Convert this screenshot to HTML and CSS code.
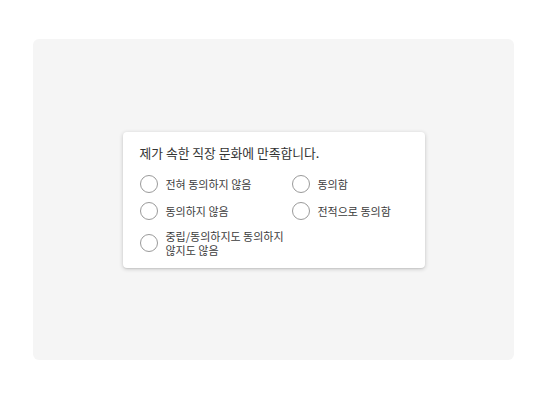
FILE: index.html
```html
<!DOCTYPE html>
<html>

<head>
  <meta charset="utf-8">
  <title>Survey</title>
  <link rel="stylesheet" href="styles.css">
</head>

<body>
  <div class="panel">
    <div class="card">
      <p class="question">제가 속한 직장 문화에 만족합니다.</p>

      <div class="options">
        <label class="option">
          <span class="radio"></span>
          <span class="option-label">전혀 동의하지 않음</span>
        </label>
        <label class="option">
          <span class="radio"></span>
          <span class="option-label">동의함</span>
        </label>
        <label class="option">
          <span class="radio"></span>
          <span class="option-label">동의하지 않음</span>
        </label>
        <label class="option">
          <span class="radio"></span>
          <span class="option-label">전적으로 동의함</span>
        </label>
        <label class="option">
          <span class="radio"></span>
          <span class="option-label">중립/동의하지도 동의하지 않지도 않음</span>
        </label>
      </div>
    </div>
  </div>
</body>

</html>
```

FILE: styles.css
```css
body {
  margin: 0;
  font-family: "Noto Sans CJK KR", "Noto Sans", sans-serif;
  background: #fff;
}

.panel {
  margin: 39px 33px 0;
  height: 321px;
  background: #f5f5f5;
  border-radius: 6px;
  display: flex;
  align-items: center;
  justify-content: center;
}

.card {
  width: 266px;
  padding: 12px 19px 11px 17px;
  background: #fff;
  border-radius: 4px;
  box-shadow: 0 1px 4px rgba(0, 0, 0, 0.2), 0 1px 1px rgba(0, 0, 0, 0.06);
}

.question {
  margin: 0 0 13px;
  font-size: 12.8px;
  line-height: 18px;
  color: #333;
}

.options {
  display: grid;
  grid-template-columns: 152px 1fr;
  row-gap: 9px;
}

.option {
  display: flex;
  align-items: center;
  gap: 8px;
}

.radio {
  flex: none;
  width: 18px;
  height: 18px;
  border: 1px solid #9a9a9a;
  border-radius: 50%;
  box-sizing: border-box;
}

.option-label {
  font-size: 11px;
  line-height: 14px;
  color: #3c3c3c;
  max-width: 124px;
}
```
